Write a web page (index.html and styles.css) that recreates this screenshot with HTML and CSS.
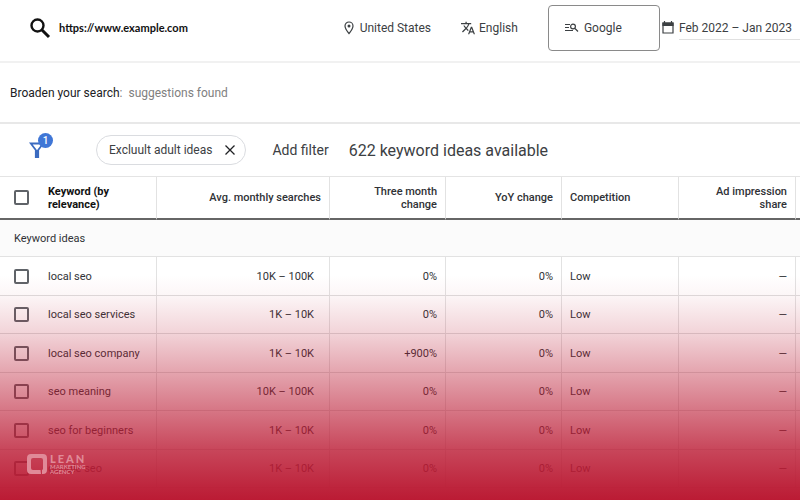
FILE: index.html
```html
<!DOCTYPE html>
<html lang="en">
<head>
<meta charset="utf-8">
<title>Keyword ideas</title>
<link rel="stylesheet" href="styles.css">
</head>
<body>
<div class="page">
  <header class="topbar">
    <label class="search">
      <svg class="search-icon" viewBox="0 0 20 20" aria-hidden="true"><circle cx="7.5" cy="7.5" r="6" fill="none" stroke="currentColor" stroke-width="2.4"/><path d="M12 12l7 7" stroke="currentColor" stroke-width="3"/></svg>
      <input class="search-input" type="text" aria-label="Website" value="https://www.example.com">
    </label>
    <button class="setting location" type="button">
      <svg class="pin-icon" viewBox="0 0 10 14" aria-hidden="true"><path d="M5 1a4 4 0 0 1 4 4c0 2.700-4 7.500-4 7.500S1 7.700 1 5a4 4 0 0 1 4-4z" fill="none" stroke="currentColor" stroke-width="1.200"/><circle cx="5" cy="5" r="1.500" fill="currentColor"/></svg>
      United States
    </button>
    <button class="setting language" type="button">
      <svg class="icon" viewBox="1 1 22 22" aria-hidden="true"><path fill="currentColor" d="M12.870 15.070l-2.540-2.510.03-.03A17.520 17.520 0 0 0 14.070 6H17V4h-7V2H8v2H1v2h11.170C11.500 7.920 10.440 9.750 9 11.350 8.070 10.320 7.300 9.190 6.690 8h-2c.73 1.630 1.730 3.170 2.980 4.560l-5.090 5.020L4 19l5-5 3.110 3.110.76-2.040zM18.500 10h-2L12 22h2l1.120-3h4.750L21 22h2l-4.500-12zm-2.620 7l1.620-4.330L19.120 17h-3.240z"/></svg>
      English
    </button>
    <button class="setting network" type="button">
      <svg class="list-icon" viewBox="0 0 13 10" aria-hidden="true"><path d="M0 1.500h5M0 4.500h4M0 7.500h8M10 5.500l3 3" stroke="currentColor" stroke-width="1.200"/><circle cx="8" cy="3.500" r="2.400" fill="none" stroke="currentColor" stroke-width="1.200"/></svg>
      Google
    </button>
    <button class="setting dates" type="button">
      <svg class="calendar-icon" viewBox="0 0 12 13" aria-hidden="true"><path d="M1 2h10v10H1z" fill="none" stroke="currentColor" stroke-width="1.200"/><path d="M1 2h10v2.500H1zM2.500 0v2M9.500 0v2" fill="currentColor" stroke="currentColor" stroke-width="1.200"/></svg>
      <span class="date-range">Feb 2022 – Jan 2023</span>
    </button>
  </header>

  <section class="broaden">
    <span class="broaden-label">Broaden your search<span class="muted">:</span></span>
    <span class="muted">suggestions found</span>
  </section>

  <section class="filters">
    <button class="filter-button" type="button" aria-label="Filters, 1 active">
      <svg class="funnel-icon" viewBox="0 0 16 16" aria-hidden="true"><path d="M1.800 1.500h12.400L9.200 8v7H6.800V8z" fill="none" stroke="currentColor" stroke-width="1.800"/><path d="M6.800 8h2.400v7H6.800z" fill="currentColor"/></svg>
      <span class="badge">1</span>
    </button>
    <button class="chip" type="button">
      Excluult adult ideas
      <svg class="close-icon" viewBox="0 0 10 10" aria-hidden="true"><path d="M0.500 0.500l9 9M9.500 0.500l-9 9" stroke="currentColor" stroke-width="1.300"/></svg>
    </button>
    <button class="add-filter" type="button">Add filter</button>
    <h1 class="summary">622 keyword ideas available</h1>
  </section>

  <table class="ideas">
    <colgroup>
      <col class="col-check"><col class="col-keyword"><col class="col-searches"><col class="col-change"><col class="col-change"><col class="col-wide"><col class="col-wide"><col class="col-rest">
    </colgroup>
    <thead>
      <tr>
        <th class="check"><input type="checkbox" aria-label="Select all"></th>
        <th class="keyword">Keyword (by relevance)</th>
        <th class="num">Avg. monthly searches</th>
        <th class="num">Three month change</th>
        <th class="num">YoY change</th>
        <th>Competition</th>
        <th class="num">Ad impression share</th>
        <th class="rest"></th>
      </tr>
    </thead>
    <tbody>
      <tr class="group"><th colspan="8">Keyword ideas</th></tr>
    </tbody>
    <tbody class="rows">
      <tr><td class="check"><input type="checkbox" aria-label="local seo"></td><td class="keyword">local seo</td><td class="num searches">10K – 100K</td><td class="num">0%</td><td class="num">0%</td><td>Low</td><td class="num">—</td><td class="rest"></td></tr>
      <tr><td class="check"><input type="checkbox" aria-label="local seo services"></td><td class="keyword">local seo services</td><td class="num searches">1K – 10K</td><td class="num">0%</td><td class="num">0%</td><td>Low</td><td class="num">—</td><td class="rest"></td></tr>
      <tr><td class="check"><input type="checkbox" aria-label="local seo company"></td><td class="keyword">local seo company</td><td class="num searches">1K – 10K</td><td class="num">+900%</td><td class="num">0%</td><td>Low</td><td class="num">—</td><td class="rest"></td></tr>
      <tr><td class="check"><input type="checkbox" aria-label="seo meaning"></td><td class="keyword">seo meaning</td><td class="num searches">10K – 100K</td><td class="num">0%</td><td class="num">0%</td><td>Low</td><td class="num">—</td><td class="rest"></td></tr>
      <tr><td class="check"><input type="checkbox" aria-label="seo for beginners"></td><td class="keyword">seo for beginners</td><td class="num searches">1K – 10K</td><td class="num">0%</td><td class="num">0%</td><td>Low</td><td class="num">—</td><td class="rest"></td></tr>
      <tr><td class="check"><input type="checkbox" aria-label="google seo"></td><td class="keyword">google seo</td><td class="num searches">1K – 10K</td><td class="num">0%</td><td class="num">0%</td><td>Low</td><td class="num">—</td><td class="rest"></td></tr>
    </tbody>
  </table>

  <div class="fade"></div>
  <div class="brand">
    <svg class="brand-mark" viewBox="0 0 20 20" aria-hidden="true"><path fill="currentColor" fill-rule="evenodd" d="M4 0h12a4 4 0 0 1 4 4v12a4 4 0 0 1-4 4h-1v-4a1.500 1.500 0 0 0 1-1.500V6a2 2 0 0 0-2-2H6a2 2 0 0 0-2 2v8a2 2 0 0 0 2 2h7.500L14 20H4a4 4 0 0 1-4-4V4a4 4 0 0 1 4-4z"/></svg>
    <div class="brand-text">
      <span class="brand-name">LEAN</span>
      <span class="brand-sub">MARKETING</span>
      <span class="brand-sub">AGENCY</span>
    </div>
  </div>
</div>
</body>
</html>
```
FILE: styles.css
```css
* { box-sizing: border-box; }

body {
  margin: 0;
  background: #fff;
  color: #3c4043;
  font-family: Roboto, "Liberation Sans", sans-serif;
  font-size: 12px;
}

button {
  margin: 0;
  padding: 0;
  border: 0;
  background: none;
  color: inherit;
  font: inherit;
}

svg { display: block; flex: none; overflow: visible; }

.page {
  position: relative;
  height: 100vh;
  overflow: hidden;
}

.topbar {
  display: flex;
  align-items: center;
  height: 63px;
  padding: 0 0 6px 30px;
  border-bottom: 2px solid #f1f1f1;
  white-space: nowrap;
}

.search {
  display: flex;
  flex: 1;
  align-items: center;
  gap: 9px;
  color: #111;
}

.search-icon { width: 20px; height: 20px; }

.search-input {
  width: 100%;
  min-width: 0;
  padding: 0;
  border: 0;
  outline: 0;
  background: none;
  color: #111;
  font: 700 11px Lato, sans-serif;
}

.setting {
  display: flex;
  align-items: center;
  gap: 6px;
}

.pin-icon { width: 10px; height: 14px; }
.icon { width: 14px; height: 14px; }
.list-icon { width: 13px; height: 10px; }
.calendar-icon { width: 12px; height: 13px; }

.language { gap: 4px; margin-left: 30px; }

.network {
  width: 112px;
  height: 46px;
  margin-left: 30px;
  padding-left: 16px;
  border: 1px solid #8a8a8a;
  border-radius: 4px;
}

.dates { gap: 5px; margin-left: 2px; }

.date-range {
  padding: 5px 8px 4px 0;
  border-bottom: 1px solid #e0e0e0;
}

.broaden {
  display: flex;
  align-items: center;
  gap: 6px;
  height: 61px;
  padding-left: 10px;
  border-bottom: 2px solid #e8e8e8;
}

.broaden-label { color: #202124; }
.muted { color: #808080; }

.filters {
  display: flex;
  align-items: center;
  height: 53px;
  padding-left: 29px;
  border-bottom: 1px solid #e4e4e4;
  white-space: nowrap;
}

.filter-button {
  position: relative;
  width: 24px;
  color: #3b6bc0;
}

.funnel-icon { width: 16px; height: 16px; }

.badge {
  position: absolute;
  top: -9px;
  left: 9px;
  width: 15px;
  height: 15px;
  border-radius: 50%;
  background: #3f76d6;
  color: #fff;
  font-size: 10px;
  font-weight: 500;
  line-height: 15px;
}

.chip {
  display: flex;
  align-items: center;
  gap: 13px;
  height: 30px;
  margin-left: 43px;
  padding: 0 10px 0 12px;
  border: 1px solid #dadce0;
  border-radius: 15px;
}

.close-icon { width: 10px; height: 10px; color: #202124; }
.add-filter { margin-left: 26px; font-size: 14px; }

.summary {
  margin: 0 0 0 20px;
  font-size: 16px;
  font-weight: 400;
}

.ideas {
  width: 100%;
  border-collapse: separate;
  border-spacing: 0;
  table-layout: fixed;
  color: #303236;
  font-size: 11px;
}

.col-check { width: 48px; }
.col-keyword { width: 109px; }
.col-searches { width: 173px; }
.col-change { width: 116px; }
.col-wide { width: 117px; }
.col-rest { width: 4px; }

.ideas th,
.ideas td {
  padding: 0 8px;
  border-right: 1px solid #e2e2e2;
  text-align: left;
}

.ideas .check { padding: 0 0 0 14px; border-right: 0; }
.ideas .keyword { padding-left: 0; }
.ideas .num { padding-left: 20px; text-align: right; }
.ideas .searches { padding-right: 15px; }
.ideas .rest { padding: 0; border-right: 0; }

.ideas thead th {
  height: 43px;
  border-bottom: 2px solid #666;
  font-weight: 500;
  line-height: 13px;
}

.ideas thead .keyword { color: #111; font-weight: 700; }

.ideas .group th {
  height: 37px;
  padding-left: 14px;
  border-right: 0;
  border-bottom: 1px solid #e2e2e2;
  background: #fbfbfb;
  font-weight: 400;
}

.rows td {
  height: 39px;
  border-bottom: 1px solid #dedede;
  white-space: nowrap;
}

.rows tr:nth-child(even) td { height: 38px; }

.ideas input {
  display: block;
  width: 15px;
  height: 15px;
  margin: 0;
  border: 2px solid #5f6368;
  border-radius: 2px;
  appearance: none;
}

.fade {
  position: absolute;
  inset: 50% 0 0;
  background: linear-gradient(
    rgba(187, 27, 52, 0) 10%,
    rgba(187, 27, 52, 0.04) 18%,
    rgba(187, 27, 52, 0.19) 33%,
    rgba(187, 27, 52, 0.41) 50%,
    rgba(187, 27, 52, 0.61) 65%,
    rgba(187, 27, 52, 0.81) 80%,
    rgba(187, 27, 52, 0.95) 94%,
    rgb(187, 27, 52) 100%
  );
  pointer-events: none;
}

.brand {
  position: absolute;
  bottom: 26px;
  left: 27px;
  display: flex;
  align-items: center;
  gap: 3px;
  color: #e08a98;
}

.brand-mark { width: 20px; height: 20px; }
.brand-text { display: flex; flex-direction: column; }

.brand-name {
  font: 900 11px/10px Lato, sans-serif;
  letter-spacing: 2px;
}

.brand-sub { font: 700 6px/5px Lato, sans-serif; }
```
